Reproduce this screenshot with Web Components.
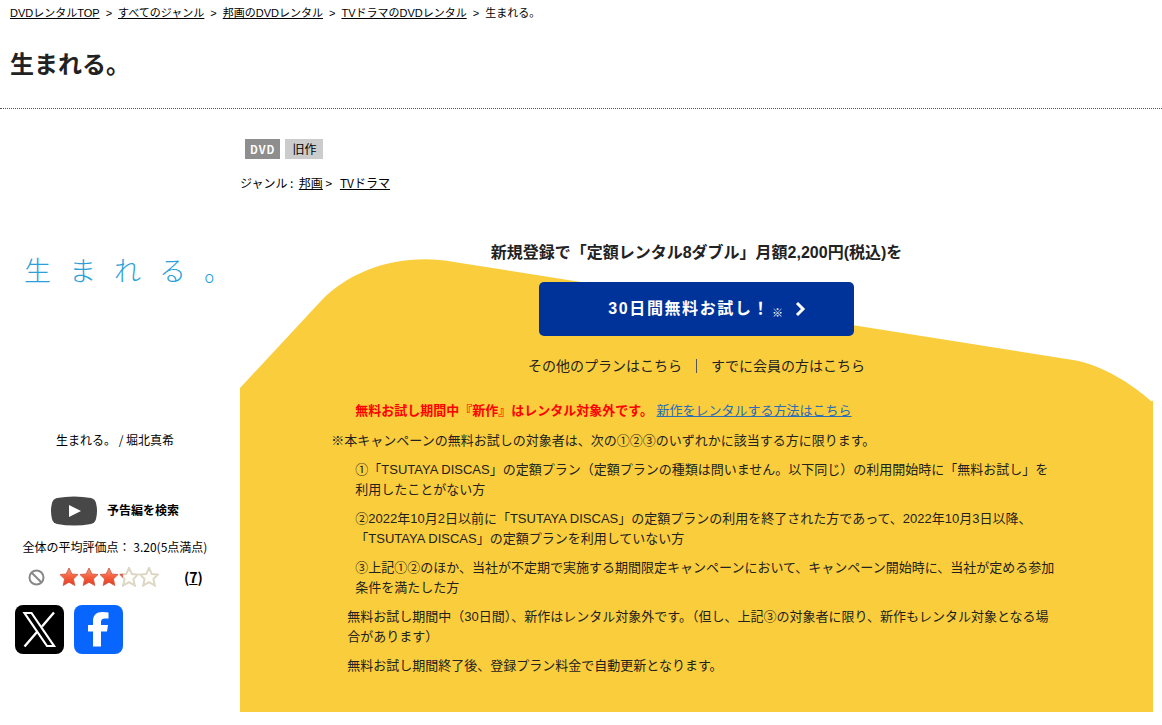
<!DOCTYPE html>
<html lang="ja">
<head>
<meta charset="utf-8">
<meta name="viewport" content="width=device-width, initial-scale=1">
<title>生まれる。</title>
<style>
  body {
    margin: 0;
    background: #fff;
    color: #000;
    font: 12px/20px "Noto Sans CJK JP", sans-serif;
  }
</style>
</head>
<body>
<rental-page>
  <bread-crumb slot="crumbs">
    <a href="#">DVDレンタルTOP</a>
    <a href="#">すべてのジャンル</a>
    <a href="#">邦画のDVDレンタル</a>
    <a href="#">TVドラマのDVDレンタル</a>
    <span>生まれる。</span>
  </bread-crumb>
  <span slot="title">生まれる。</span>

  <cover-art slot="side" caption="生まれる。 / 堀北真希">生まれる。</cover-art>
  <trailer-link slot="side">予告編を検索</trailer-link>
  <score-rating slot="side" score="3.20" count="7"></score-rating>
  <share-links slot="side"></share-links>

  <title-info slot="content">
    <a slot="genre" href="#">邦画</a>
    <a slot="sub" href="#">TVドラマ</a>
  </title-info>
  <trial-campaign slot="content">
    <span slot="lead">新規登録で「定額レンタル8ダブル」月額2,200円(税込)を</span>
    <span slot="action">30日間無料お試し！</span>
    <campaign-note level="2" alert>無料お試し期間中『新作』はレンタル対象外です。 <a slot="link" href="#">新作をレンタルする方法はこちら</a></campaign-note>
    <campaign-note level="0">※本キャンペーンの無料お試しの対象者は、次の①②③のいずれかに該当する方に限ります。</campaign-note>
    <campaign-note level="2">①「TSUTAYA DISCAS」の定額プラン（定額プランの種類は問いません。以下同じ）の利用開始時に「無料お試し」を利用したことがない方</campaign-note>
    <campaign-note level="2">②2022年10月2日以前に「TSUTAYA DISCAS」の定額プランの利用を終了された方であって、2022年10月3日以降、「TSUTAYA DISCAS」の定額プランを利用していない方</campaign-note>
    <campaign-note level="2">③上記①②のほか、当社が不定期で実施する期間限定キャンペーンにおいて、キャンペーン開始時に、当社が定める参加条件を満たした方</campaign-note>
    <campaign-note level="1">無料お試し期間中（30日間）、新作はレンタル対象外です。（但し、上記③の対象者に限り、新作もレンタル対象となる場合があります）</campaign-note>
    <campaign-note level="1">無料お試し期間終了後、登録プラン料金で自動更新となります。</campaign-note>
  </trial-campaign>
</rental-page>

<script>
class BaseElement extends HTMLElement {
  constructor() {
    super();
    this.attachShadow({ mode: 'open' });
  }

  connectedCallback() {
    this.shadowRoot.innerHTML = this.render();
  }
}

class RentalPage extends BaseElement {
  render() {
    return `
      <style>
        :host { display: block; }
        header {
          padding: 3px 10px 29px;
          border-bottom: 1px dotted #555;
        }
        h1 {
          margin: 24px 0 0;
          color: #222;
          font-size: 24px;
          line-height: 32px;
        }
        main {
          display: grid;
          grid-template-columns: 210px minmax(0, 1fr);
          gap: 20px;
          padding: 0 9px 0 10px;
        }
      </style>
      <header>
        <slot name="crumbs"></slot>
        <h1><slot name="title"></slot></h1>
      </header>
      <main>
        <aside><slot name="side"></slot></aside>
        <article><slot name="content"></slot></article>
      </main>
    `;
  }
}

class BreadCrumb extends BaseElement {
  render() {
    return `
      <style>
        :host {
          display: block;
          font-family: "Liberation Sans", "Noto Sans CJK JP", sans-serif;
          font-size: 11px;
        }
        nav { display: flex; flex-wrap: wrap; }
        ::slotted(a) { color: inherit; }
        .sep { margin: 0 6px; }
      </style>
      <nav aria-label="breadcrumb"></nav>
    `;
  }

  connectedCallback() {
    super.connectedCallback();
    const nav = this.shadowRoot.querySelector('nav');
    [...this.children].forEach((item, i) => {
      item.slot = `item-${i}`;
      if (i > 0) {
        nav.insertAdjacentHTML('beforeend', '<span class="sep">&gt;</span>');
      }
      nav.insertAdjacentHTML('beforeend', `<slot name="item-${i}"></slot>`);
    });
  }
}

class CoverArt extends BaseElement {
  render() {
    return `
      <style>
        :host { display: block; text-align: center; }
        figure { margin: 0; }
        .art {
          display: flex;
          align-items: center;
          height: 321px;
          padding-left: 14px;
          color: #2a9fd8;
          font-size: 27px;
          font-weight: 300;
          letter-spacing: 18px;
          white-space: nowrap;
        }
      </style>
      <figure>
        <div class="art"><slot></slot></div>
        <figcaption>${this.getAttribute('caption')}</figcaption>
      </figure>
    `;
  }
}

class TrailerLink extends BaseElement {
  render() {
    return `
      <style>
        :host { display: block; margin-top: 46px; }
        a {
          display: flex;
          align-items: center;
          justify-content: center;
          gap: 10px;
          color: inherit;
          font-weight: bold;
          text-decoration: none;
        }
        svg { display: block; }
        .label { padding-bottom: 2px; }
      </style>
      <a href="#">
        <svg width="46" height="30" viewBox="0 0 46 30" aria-hidden="true">
          <path d="M6 2Q23-1 40 2Q44 3 45 7Q47 15 45 23Q44 27 40 28Q23 31 6 28Q2 27 1 23Q-1 15 1 7Q2 3 6 2Z" fill="#474747"/>
          <path d="M18 9L30 15L18 21Z" fill="#fff"/>
        </svg>
        <span class="label"><slot></slot></span>
      </a>
    `;
  }
}

class ScoreRating extends BaseElement {
  star(i, score) {
    const fill = Math.max(0, Math.min(1, score - i));
    const shape = 'M10 1L12.8 7L19 7.5L14.4 12L15.8 18.5L10 15.2L4.2 18.5L5.6 12L1 7.5L7.2 7Z';
    return `
      <svg width="20" height="20" viewBox="0 0 20 20">
        <defs>
          <linearGradient id="red${i}" x1="0" y1="0" x2="0" y2="1">
            <stop offset="0" stop-color="#ff9a78"/>
            <stop offset=".5" stop-color="#f4603f"/>
            <stop offset="1" stop-color="#e93a1c"/>
          </linearGradient>
          <clipPath id="part${i}"><rect width="${20 * fill}" height="20"/></clipPath>
        </defs>
        ${fill < 1 ? `<path d="${shape}" fill="#fffefa" stroke="#dcd6c4" stroke-width="1.9"/>` : ''}
        <path d="${shape}" fill="url(#red${i})" stroke="#cf5a45" stroke-width=".9" clip-path="url(#part${i})"/>
      </svg>`;
  }

  render() {
    const score = this.getAttribute('score');
    return `
      <style>
        :host { display: block; margin-top: 11px; text-align: center; }
        p { margin: 0; }
        .row {
          display: flex;
          align-items: center;
          margin-top: 10px;
          padding-left: 18px;
        }
        svg { display: block; }
        .stars { display: flex; margin: 0 25px 0 14px; }
        .count { font-size: 14px; font-weight: bold; }
        a { color: inherit; }
      </style>
      <p>全体の平均評価点： ${score}(5点満点)</p>
      <div class="row">
        <svg width="17" height="17" viewBox="0 0 17 17" fill="none" stroke="#888" stroke-width="2" aria-hidden="true">
          <circle cx="8.5" cy="8.5" r="7"/><path d="M3.7 3.7L13.3 13.3"/>
        </svg>
        <div class="stars" role="img" aria-label="${score}">
          ${[0, 1, 2, 3, 4].map(i => this.star(i, Number(score))).join('')}
        </div>
        <span class="count">(<a href="#">${this.getAttribute('count')}</a>)</span>
      </div>
    `;
  }
}

class ShareLinks extends BaseElement {
  render() {
    return `
      <style>
        :host { display: flex; gap: 10px; margin-top: 18px; padding-left: 5px; }
        a { display: block; border-radius: 8px; overflow: hidden; }
        svg { display: block; }
        .x { background: #000; }
        .facebook { background: #0866ff; }
      </style>
      <a class="x" href="#" aria-label="X">
        <svg width="49" height="49" viewBox="0 0 49 49" fill="none" stroke="#fff">
          <path d="M9.5 8H16.5L39 41H32Z" stroke-width="2.2"/>
          <path d="M39 7.5L27 21.5M22 27L9.5 41.5" stroke-width="2.4"/>
        </svg>
      </a>
      <a class="facebook" href="#" aria-label="Facebook">
        <svg width="49" height="49" viewBox="0 0 49 49">
          <path d="M19 41.5V26.5H14V20H19V16C19 10 22.5 7 28.5 7Q32 7 34.5 7.6V13.5H31C28 13.5 27 14.8 27 17V20H34L33 26.5H27V41.5Z" fill="#fff"/>
        </svg>
      </a>
    `;
  }
}

class TitleInfo extends BaseElement {
  render() {
    return `
      <style>
        :host { display: block; padding-top: 30px; }
        .badges { display: flex; gap: 5px; padding-left: 5px; }
        .badge { padding: 0 7px; background: #ccc; }
        .media {
          padding: 0 5px;
          background: #8e8e8e;
          color: #fff;
          font-size: 11px;
          font-weight: bold;
          letter-spacing: 1px;
        }
        p { margin: 14px 0 0; }
        ::slotted(a) { color: inherit; }
        ::slotted([slot="sub"]) { margin-left: 5px; }
      </style>
      <div class="badges">
        <span class="badge media">DVD</span>
        <span class="badge">旧作</span>
      </div>
      <p>ジャンル :&nbsp; <slot name="genre"></slot> &gt; <slot name="sub"></slot></p>
    `;
  }
}

class TrialCampaign extends BaseElement {
  render() {
    return `
      <style>
        :host {
          display: block;
          position: relative;
          margin-top: 47px;
          padding-bottom: 36px;
          color: #222;
          font-family: "Liberation Sans", "Noto Sans CJK JP", sans-serif;
        }
        .hill {
          position: absolute;
          top: 19px;
          left: 0;
          z-index: -1;
          width: 100%;
          height: calc(100% - 19px);
        }
        h2 {
          margin: 0;
          font-size: 16px;
          line-height: 26px;
          text-align: center;
        }
        .button {
          display: flex;
          align-items: center;
          justify-content: center;
          box-sizing: border-box;
          width: 315px;
          max-width: 100%;
          height: 54px;
          margin: 16px auto 20px;
          padding-left: 22px;
          border-radius: 5px;
          background: #003399;
          color: #fff;
          font-size: 16px;
          font-weight: bold;
          letter-spacing: 0.1em;
          text-decoration: none;
        }
        .mark { padding-top: 8px; margin: 0 10px 0 2px; font-size: 11px; font-weight: normal; }
        nav {
          display: flex;
          justify-content: center;
          align-items: center;
          gap: 14px;
          margin-bottom: 25px;
          font-size: 14px;
        }
        nav a { color: inherit; text-decoration: none; }
        nav i { width: 1px; height: 14px; background: #555; }
        .notes {
          display: grid;
          gap: 9px;
          width: 80%;
          margin: 0 auto;
          font-size: 13px;
        }
      </style>
      <svg class="hill" viewBox="0 0 913 453" preserveAspectRatio="none" aria-hidden="true">
        <path d="M0 129L80 43C113 8 165-6 214 3L833 101C863 106 893 126 911 142H913V453H0Z" fill="#facd3c"/>
      </svg>
      <h2><slot name="lead"></slot></h2>
      <a class="button" href="#">
        <slot name="action"></slot><span class="mark">※</span>
        <svg width="12" height="16" viewBox="0 0 12 16" fill="none" stroke="#fff" stroke-width="3" aria-hidden="true">
          <path d="M2 2L8 8L2 14"/>
        </svg>
      </a>
      <nav>
        <a href="#">その他のプランはこちら</a>
        <i></i>
        <a href="#">すでに会員の方はこちら</a>
      </nav>
      <div class="notes"><slot></slot></div>
    `;
  }
}

class CampaignNote extends BaseElement {
  render() {
    return `
      <style>
        :host { display: block; padding-right: 4px; }
        :host([level="1"]) { padding-left: 16px; }
        :host([level="2"]) { padding-left: 24px; }
        :host([alert]) { padding-bottom: 1px; }
        p { margin: 0; }
        :host([alert]) .text { color: #f00; font-weight: bold; }
        ::slotted(a) { color: #2a6cb8; }
      </style>
      <p><span class="text"><slot></slot></span><slot name="link"></slot></p>
    `;
  }
}

customElements.define('rental-page', RentalPage);
customElements.define('bread-crumb', BreadCrumb);
customElements.define('cover-art', CoverArt);
customElements.define('trailer-link', TrailerLink);
customElements.define('score-rating', ScoreRating);
customElements.define('share-links', ShareLinks);
customElements.define('title-info', TitleInfo);
customElements.define('trial-campaign', TrialCampaign);
customElements.define('campaign-note', CampaignNote);
</script>
</body>
</html>
